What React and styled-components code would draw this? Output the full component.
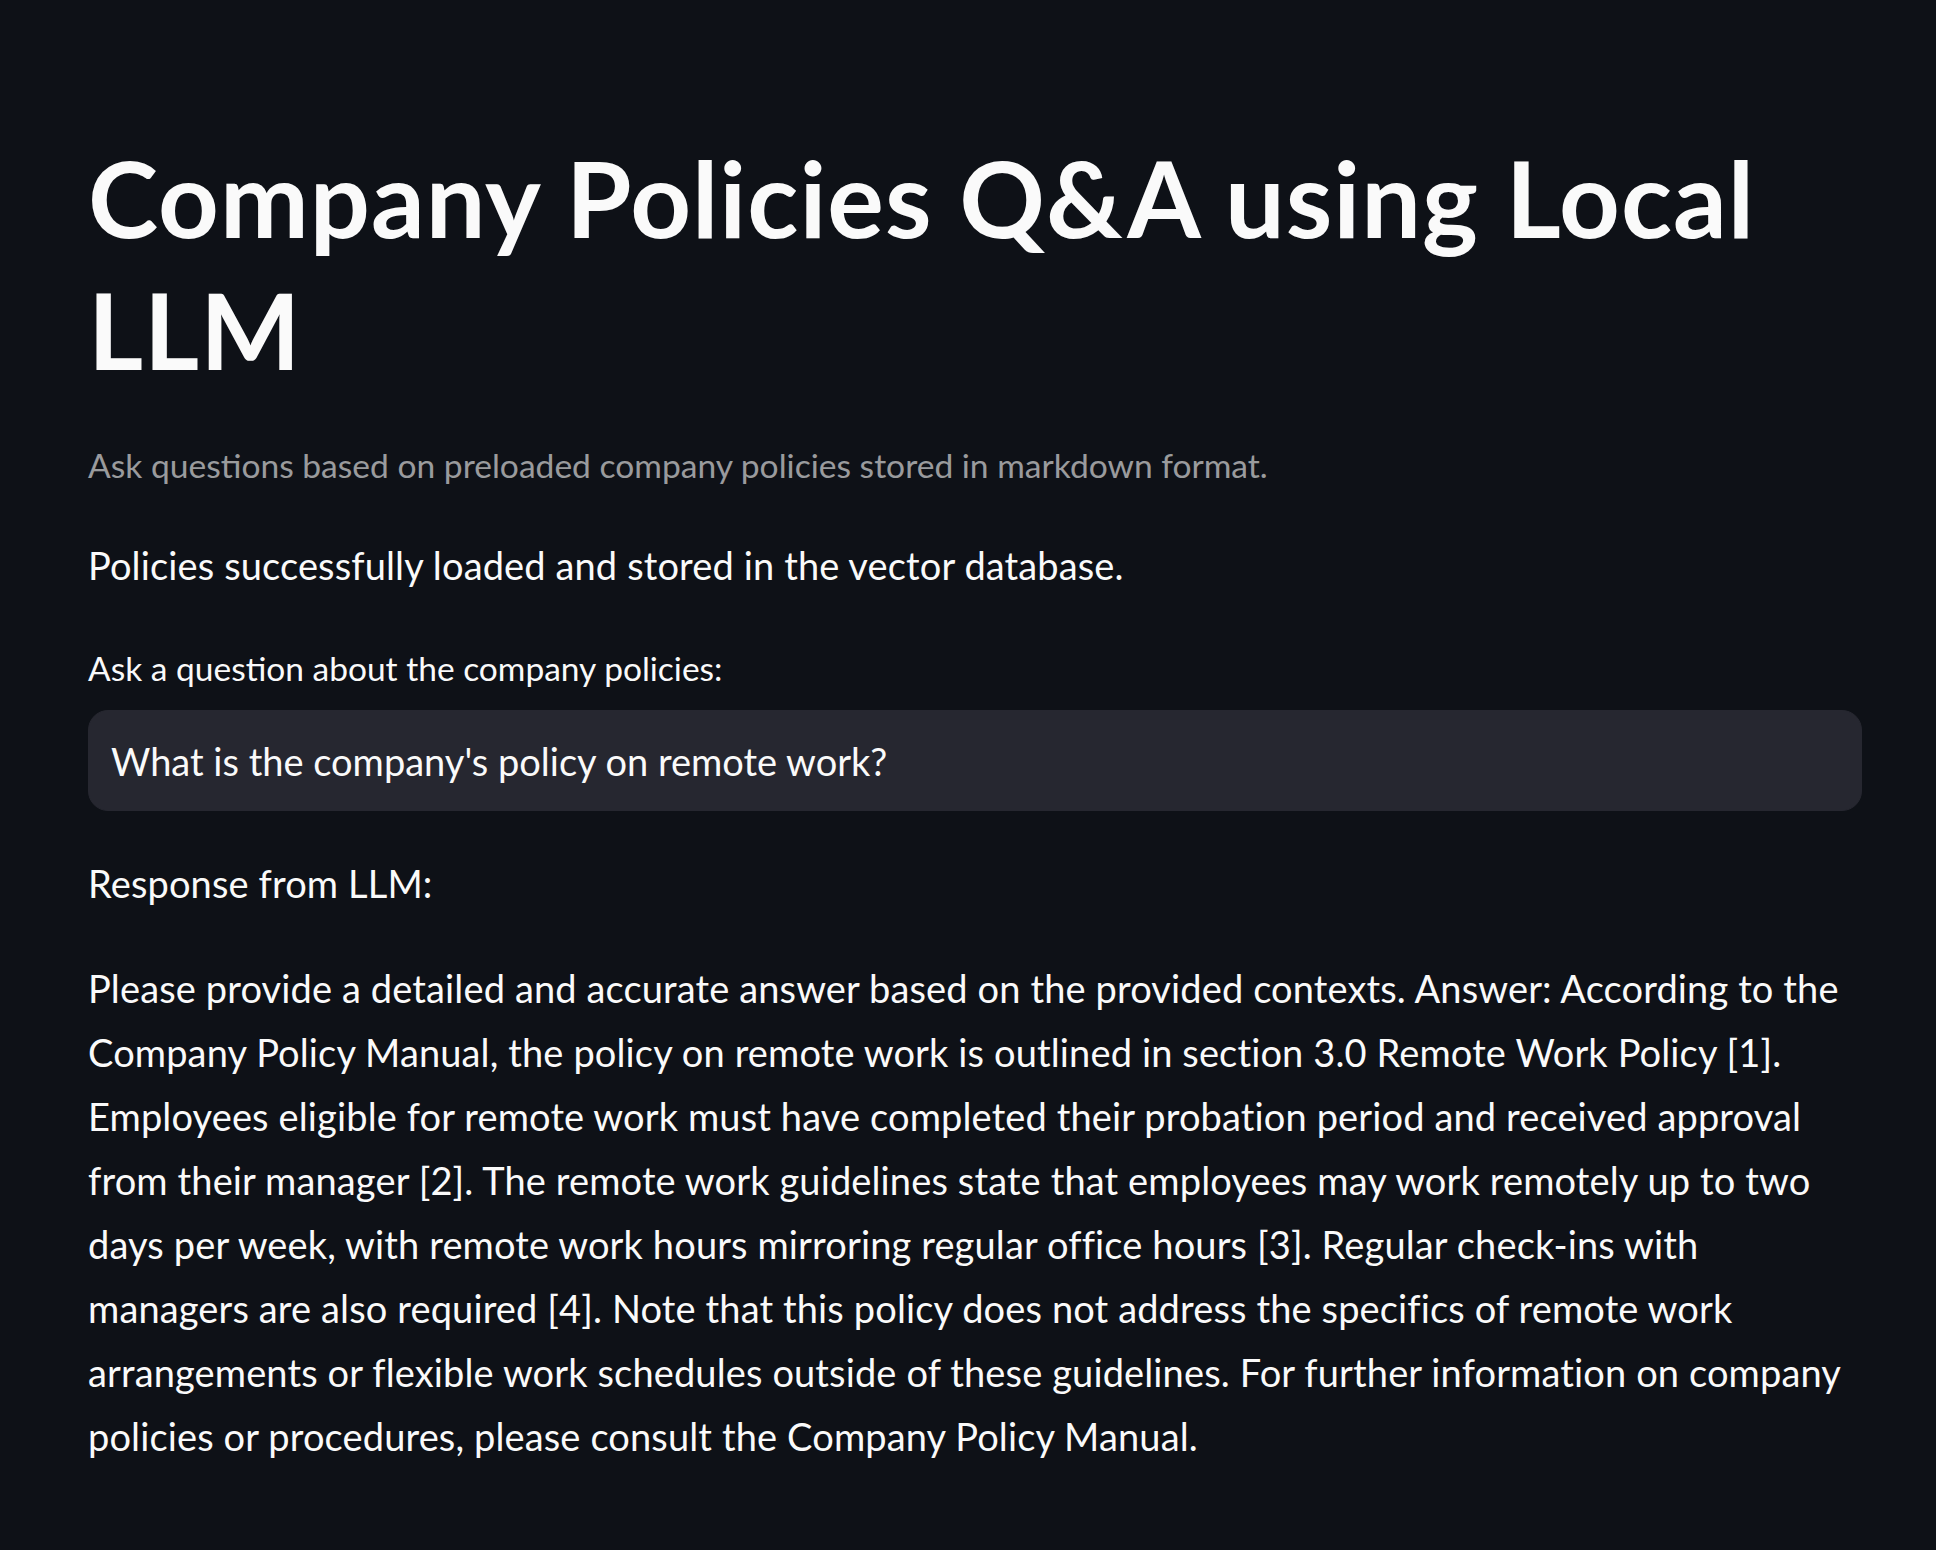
import React from 'react';
import styled, { createGlobalStyle } from 'styled-components';

const GlobalStyle = createGlobalStyle`
    html, body {
        margin: 0;
        padding: 0;
        background-color: #0E1117;
    }
    body {
        font-family: Lato, "Open Sans", sans-serif;
        color: #FAFAFA;
        min-height: 1550px;
    }
`

const Main = styled.main`
    display: flex;
    flex-direction: column;
    width: 1774px;
    padding: 131px 0 80px 88px;
`

const Titulo = styled.h1`
    margin: 0;
    font-size: 106px;
    line-height: 132px;
    font-weight: 700;
    letter-spacing: 1px;
`

const Legenda = styled.p`
    margin: 42px 0 0;
    font-size: 33.6px;
    line-height: 56px;
    color: rgba(250, 250, 250, 0.6);
`

const Texto = styled.p`
    margin: ${props => props.gap || 40}px 0 0;
    font-size: 38px;
    line-height: 64px;
    letter-spacing: 0.13px;
`

const Rotulo = styled.label`
    display: block;
    margin: 43px 0 14px;
    font-size: 33.5px;
    line-height: 56px;
`

const Campo = styled.input`
    box-sizing: border-box;
    width: 100%;
    height: 101px;
    padding: 0 22px;
    border: 1px solid #262730;
    border-radius: 20px;
    background-color: #262730;
    color: #FAFAFA;
    font-family: inherit;
    font-size: 38px;
    outline: none;
`

const App = () => {
    return (
        <>
            <GlobalStyle />
            <Main>
                <Titulo>Company Policies Q&amp;A using Local LLM</Titulo>
                <Legenda>Ask questions based on preloaded company policies stored in markdown format.</Legenda>
                <Texto>Policies successfully loaded and stored in the vector database.</Texto>
                <Rotulo htmlFor="pergunta">Ask a question about the company policies:</Rotulo>
                <Campo id="pergunta" defaultValue="What is the company's policy on remote work?" />
                <Texto>Response from LLM:</Texto>
                <Texto gap={41}>
                    Please provide a detailed and accurate answer based on the provided contexts. Answer: According to the Company Policy Manual, the policy on remote work is outlined in section 3.0 Remote Work Policy [1]. Employees eligible for remote work must have completed their probation period and received approval from their manager [2]. The remote work guidelines state that employees may work remotely up to two days per week, with remote work hours mirroring regular office hours [3]. Regular check-ins with managers are also required [4]. Note that this policy does not address the specifics of remote work arrangements or flexible work schedules outside of these guidelines. For further information on company policies or procedures, please consult the Company Policy Manual.
                </Texto>
            </Main>
        </>
    )
}

export default App;
